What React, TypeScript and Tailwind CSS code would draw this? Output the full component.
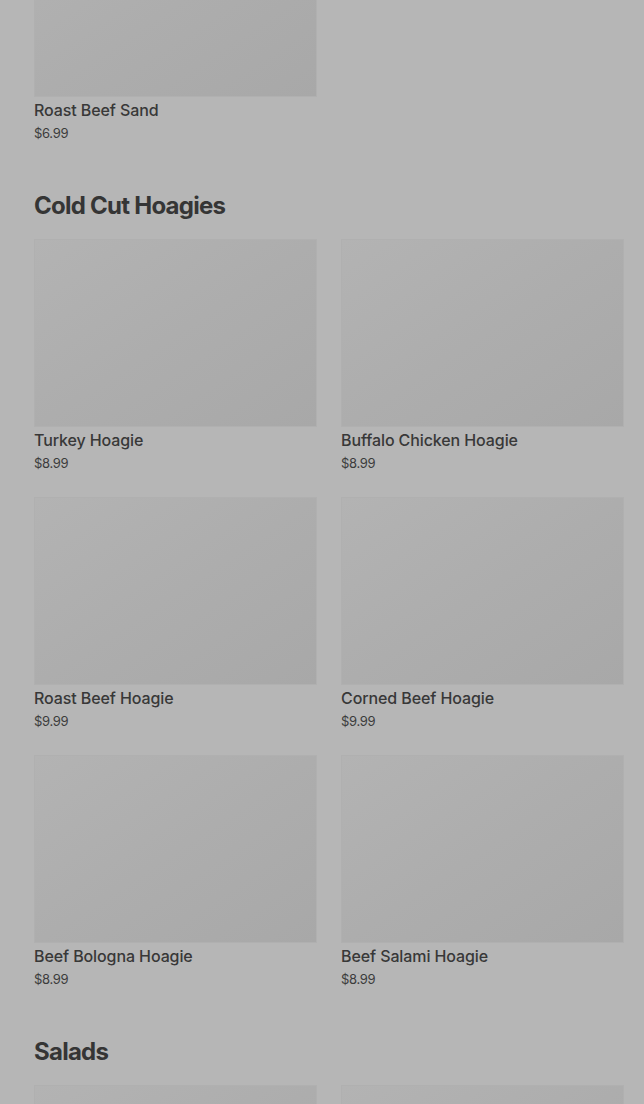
const sections = [
  {
    title: null as string | null,
    items: [{ name: 'Roast Beef Sand', price: '$6.99' }],
  },
  {
    title: 'Cold Cut Hoagies',
    items: [
      { name: 'Turkey Hoagie', price: '$8.99' },
      { name: 'Buffalo Chicken Hoagie', price: '$8.99' },
      { name: 'Roast Beef Hoagie', price: '$9.99' },
      { name: 'Corned Beef Hoagie', price: '$9.99' },
      { name: 'Beef Bologna Hoagie', price: '$8.99' },
      { name: 'Beef Salami Hoagie', price: '$8.99' },
    ],
  },
  {
    title: 'Salads',
    items: [
      { name: 'Garden Salad', price: '$7.99' },
      { name: 'Chef Salad', price: '$9.99' },
    ],
  },
]

function ItemCard({ name, price }: { name: string; price: string }) {
  return (
    <div className="flex flex-col">
      <div className="h-[188px] border border-[#b0b0b0] bg-gradient-to-br from-[#b3b3b3] via-[#adadad] to-[#a8a8a8]" />
      <div className="mt-[3px] text-[16px] leading-5 font-medium tracking-[-0.1px] text-[#383838]">{name}</div>
      <div className="mt-[5px] text-[13px] leading-4 tracking-[-0.3px] text-[#3c3c3c]">{price}</div>
    </div>
  )
}

export default function App() {
  return (
    <div
      className="h-[1104px] overflow-hidden bg-[#b6b6b6] pl-[34px] pr-[20px]"
      style={{ fontFamily: 'Inter, "Noto Sans", sans-serif' }}
    >
      <div className="-mt-[91px] flex flex-col">
        {sections.map((section, idx) => (
          <section key={idx} className={idx > 0 ? 'mt-[49px]' : ''}>
            {section.title && (
              <h2 className="mb-[17px] text-[24px] leading-8 font-bold tracking-[-0.75px] text-[#353535]">
                {section.title}
              </h2>
            )}
            <div className="grid grid-cols-2 gap-x-6 gap-y-[26px]">
              {section.items.map((item) => (
                <ItemCard key={item.name} name={item.name} price={item.price} />
              ))}
            </div>
          </section>
        ))}
      </div>
    </div>
  )
}
